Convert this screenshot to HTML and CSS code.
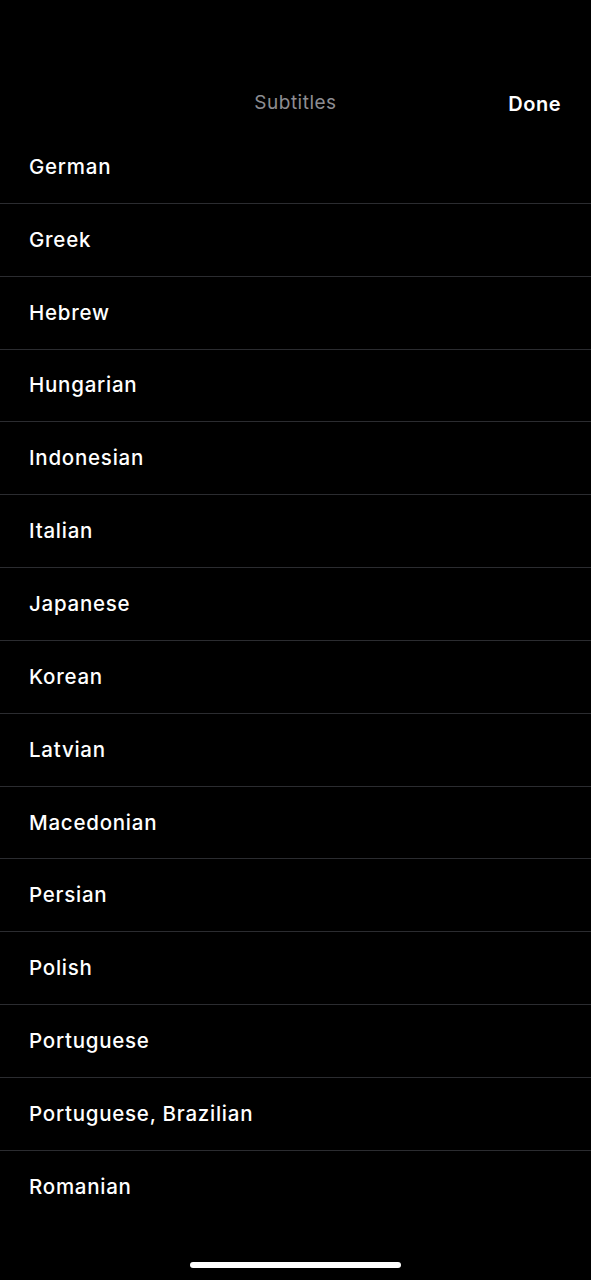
FILE: index.html
```html
<!DOCTYPE html>
<html lang="en">
<head>
<meta charset="utf-8">
<title>Subtitles</title>
<link rel="stylesheet" href="styles.css">
</head>
<body>
<div class="screen">
  <header class="nav">
    <div class="nav-title">Subtitles</div>
    <button class="nav-done">Done</button>
  </header>
  <ul class="list">
    <li class="row">German</li>
    <li class="row">Greek</li>
    <li class="row">Hebrew</li>
    <li class="row">Hungarian</li>
    <li class="row">Indonesian</li>
    <li class="row">Italian</li>
    <li class="row">Japanese</li>
    <li class="row">Korean</li>
    <li class="row">Latvian</li>
    <li class="row">Macedonian</li>
    <li class="row">Persian</li>
    <li class="row">Polish</li>
    <li class="row">Portuguese</li>
    <li class="row">Portuguese, Brazilian</li>
    <li class="row">Romanian</li>
  </ul>
  <div class="home-area">
    <div class="home-indicator"></div>
  </div>
</div>
</body>
</html>
```

FILE: styles.css
```css
html, body {
  margin: 0;
  padding: 0;
  background: #000;
}

body {
  font-family: Inter, "Noto Sans", "Liberation Sans", sans-serif;
  color: #fff;
  -webkit-font-smoothing: antialiased;
}

.screen {
  width: 591px;
  height: 1280px;
  display: flex;
  flex-direction: column;
  background: #000;
  overflow: hidden;
}

.nav {
  height: 131px;
  flex: none;
  position: relative;
  display: flex;
  align-items: flex-start;
  justify-content: center;
  padding-top: 91px;
  box-sizing: border-box;
}

.nav-title {
  font-size: 19px;
  font-weight: 400;
  color: #8d8d92;
  line-height: 24px;
  letter-spacing: 0.5px;
}

.nav-done {
  position: absolute;
  right: 30px;
  top: 92px;
  background: none;
  border: 0;
  padding: 0;
  font-family: inherit;
  font-size: 20px;
  font-weight: 600;
  color: #fff;
  line-height: 24px;
  letter-spacing: 0.5px;
}

.list {
  list-style: none;
  margin: 0;
  padding: 0;
}

.row {
  height: 72.85px;
  box-sizing: border-box;
  display: flex;
  align-items: center;
  padding-left: 29px;
  padding-bottom: 1px;
  font-size: 20.5px;
  font-weight: 500;
  letter-spacing: 0.75px;
  color: #fff;
  border-bottom: 1px solid #2b2c30;
}

.row:last-child {
  border-bottom: 0;
}

.home-area {
  flex: 1;
  display: flex;
  justify-content: center;
  align-items: flex-end;
  padding-bottom: 12px;
}

.home-indicator {
  width: 211px;
  height: 6px;
  border-radius: 3px;
  background: #fff;
}
```
